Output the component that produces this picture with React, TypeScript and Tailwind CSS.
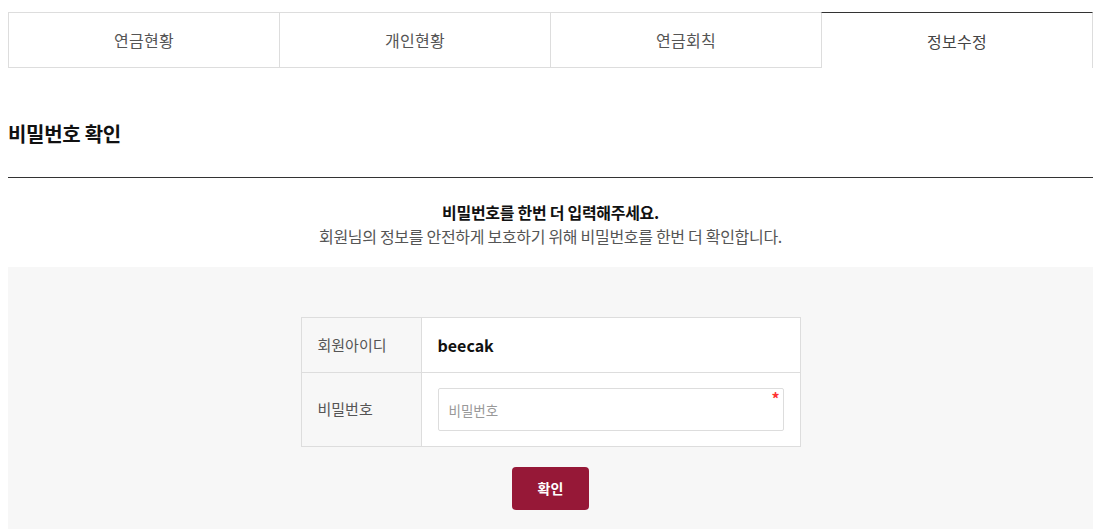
const tabs = ["연금현황", "개인현황", "연금회칙", "정보수정"];

const App = () => {
    return (
        <div className="w-[1085px] ml-2 pt-3 text-[#333]" style={{ fontFamily: '"Noto Sans CJK KR", "Noto Sans", sans-serif' }}>
            <ul className="flex h-[56px]">
                {tabs.map((tab, i) => {
                    const active = i === tabs.length - 1;
                    return (
                        <li
                            key={tab}
                            className={
                                active
                                    ? "flex-1 flex items-center justify-center border-t border-t-[#333] border-l border-r border-l-[#ddd] border-r-[#ddd] text-[16px] tracking-[0.3px] text-[#444]"
                                    : "flex-1 flex items-center justify-center border-t border-b border-l border-[#ddd] text-[16px] tracking-[0.3px] text-[#555]"
                            }
                        >
                            {tab}
                        </li>
                    );
                })}
            </ul>

            <h2 className="mt-[52px] text-[20px] font-bold text-[#111] leading-[28px] tracking-[-0.3px]">비밀번호 확인</h2>
            <div className="mt-[29px] h-px bg-[#333]"></div>

            <div className="mt-[22px] text-center leading-[24px]">
                <p className="text-[16px] font-bold text-[#111] tracking-[-0.3px]">비밀번호를 한번 더 입력해주세요.</p>
                <p className="text-[16px] text-[#555] tracking-[-0.3px]">회원님의 정보를 안전하게 보호하기 위해 비밀번호를 한번 더 확인합니다.</p>
            </div>

            <div className="mt-[19px] bg-[#f7f7f7] pt-[50px] pb-[30px]">
                <table className="mx-auto w-[500px] border-collapse bg-white">
                    <tbody>
                        <tr className="h-[55px]">
                            <th className="w-[120px] border border-[#ddd] bg-[#f7f7f7] pl-4 text-left text-[15px] font-normal text-[#555]">회원아이디</th>
                            <td className="border border-[#ddd] pl-4 text-[16px] font-bold text-[#111]">beecak</td>
                        </tr>
                        <tr className="h-[74px]">
                            <th className="border border-[#ddd] bg-[#f7f7f7] pl-4 text-left text-[15px] font-normal text-[#555]">비밀번호</th>
                            <td className="border border-[#ddd] px-4">
                                <div className="relative">
                                    <input
                                        type="password"
                                        placeholder="비밀번호"
                                        className="w-full h-[43px] border border-[#ddd] rounded-[2px] px-[10px] text-[13.5px] placeholder:text-[#999] outline-none"
                                    />
                                    <span className="absolute right-[4px] top-[2px] text-[16px] font-bold text-[#f33] leading-none">*</span>
                                </div>
                            </td>
                        </tr>
                    </tbody>
                </table>
                <div className="mt-[20px] flex justify-center">
                    <button className="w-[77px] h-[43px] rounded-[4px] bg-[#961837] text-white text-[14px] font-bold">확인</button>
                </div>
            </div>
        </div>
    );
};

export default App;
